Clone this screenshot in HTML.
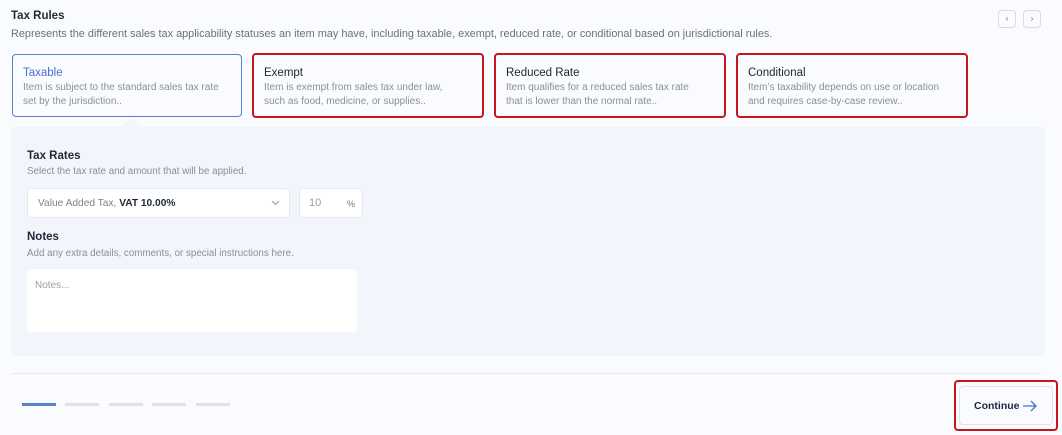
<!DOCTYPE html>
<html><head><style>
*{box-sizing:border-box;margin:0;padding:0}
body{width:1062px;height:435px;background:#fafbfe;font-family:"Liberation Sans",sans-serif;position:relative;overflow:hidden;color:#1f2937}
.a{position:absolute}
.card{position:absolute;top:53px;height:65px;width:232px;border-radius:4px;background:#fafbfe;padding:12px 10px}
.card.red{border:2px solid #c4161c}
.card h4{font-size:11.5px;font-weight:normal;color:#1f2530;margin-bottom:2px}
.card p{font-size:10px;line-height:14px;color:#8b8f97}
.nav{position:absolute;top:10px;width:18px;height:18px;border:1px solid #d9dbe0;border-radius:4px;font-size:8px;color:#666;text-align:center;line-height:16px}
.lbl{font-size:11.5px;font-weight:bold;color:#1f2937}
.sub{font-size:9.8px;color:#8b8f97}
.box{position:absolute;background:#fff;border:1px solid #e6e8ee;border-radius:4px}
.bar{position:absolute;top:403px;height:3px;width:34px;background:#e2e2e4}
</style></head><body>
<div class="a" style="left:11px;top:10px;font-size:11.5px;font-weight:bold">Tax Rules</div>
<div class="a" style="left:11px;top:28px;font-size:10.9px;color:#6b7079;white-space:nowrap">Represents the different sales tax applicability statuses an item may have, including taxable, exempt, reduced rate, or conditional based on jurisdictional rules.</div>
<div class="nav" style="left:998px">&#8249;</div>
<div class="nav" style="left:1023px">&#8250;</div>
<div class="card" style="left:12px;top:54px;height:63px;width:230px;border:1.5px solid #5b7fd0"><h4 style="color:#4a72c9">Taxable</h4><p>Item is subject to the standard sales tax rate<br>set by the jurisdiction..</p></div>
<div class="card red" style="left:252px"><h4>Exempt</h4><p>Item is exempt from sales tax under law,<br>such as food, medicine, or supplies..</p></div>
<div class="card red" style="left:494px"><h4>Reduced Rate</h4><p>Item qualifies for a reduced sales tax rate<br>that is lower than the normal rate..</p></div>
<div class="card red" style="left:736px"><h4>Conditional</h4><p>Item’s taxability depends on use or location<br>and requires case-by-case review..</p></div>
<div class="a" style="left:11px;top:127px;width:1034px;height:229px;background:#f3f5fd;border-radius:3px"></div>
<div class="a" style="left:122px;top:118px;width:0;height:0;border-left:9px solid transparent;border-right:9px solid transparent;border-bottom:9px solid #f3f5fd"></div>
<div class="a lbl" style="left:27px;top:150px">Tax Rates</div>
<div class="a sub" style="left:27px;top:166px">Select the tax rate and amount that will be applied.</div>
<div class="box" style="left:27px;top:188px;width:263px;height:30px"><span class="a" style="left:10px;top:9px;font-size:10.2px;color:#7d828a;white-space:nowrap">Value Added Tax, <b style="color:#1f2937">VAT 10.00%</b></span><svg class="a" style="left:243px;top:11px" width="9" height="6" viewBox="0 0 9 6"><path d="M1 1l3.5 3.5L8 1" fill="none" stroke="#999" stroke-width="1"/></svg></div>
<div class="box" style="left:299px;top:188px;width:64px;height:30px"><span class="a" style="left:9px;top:8px;font-size:11px;color:#9a9ea5">10</span><span class="a" style="left:47px;top:10px;font-size:9px;color:#777">%</span></div>
<div class="a lbl" style="left:27px;top:231px">Notes</div>
<div class="a sub" style="left:27px;top:248px">Add any extra details, comments, or special instructions here.</div>
<div class="box" style="left:27px;top:269px;width:330px;height:63px;border-color:#fff"><span class="a" style="left:7px;top:10px;font-size:10px;color:#9a9ea5">Notes...</span></div>
<div class="a" style="left:11px;top:373px;width:1030px;height:1px;background:#e8e9ee"></div>
<div class="bar" style="left:22px;background:#5b80cf"></div>
<div class="bar" style="left:65px"></div>
<div class="bar" style="left:109px"></div>
<div class="bar" style="left:152px"></div>
<div class="bar" style="left:196px"></div>
<div class="a" style="left:954px;top:380px;width:104px;height:51px;border:2px solid #c4161c;border-radius:4px"></div>
<div class="a" style="left:959px;top:386px;width:94px;height:39px;border:1px solid #e2e3e6;border-radius:4px;background:#fafbfe"><span class="a" style="left:14px;top:13px;font-size:10.5px;color:#1d2540;font-weight:bold">Continue</span><svg class="a" style="left:62px;top:13px" width="16" height="12" viewBox="0 0 16 12"><path d="M1 6h13M9 1l5 5-5 5" fill="none" stroke="#4a6fc9" stroke-width="1.3"/></svg></div>
</body></html>
